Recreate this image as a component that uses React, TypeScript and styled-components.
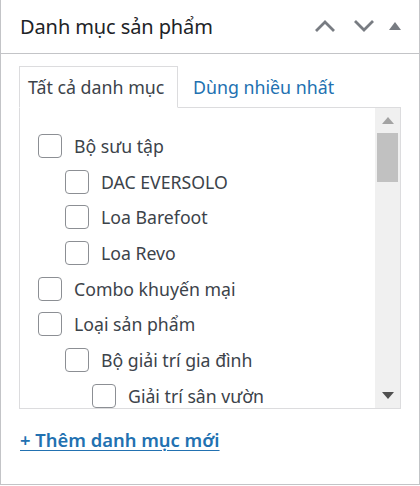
import React from 'react'
import styled, { createGlobalStyle } from 'styled-components'

const Global = createGlobalStyle`
  html, body {
    margin: 0;
    padding: 0;
    background: #fff;
  }
  body {
    font-family: "Noto Sans", "Open Sans", sans-serif;
  }
`

type Term = { name: string; level: number }

const terms: Term[] = [
  { name: 'Bộ sưu tập', level: 0 },
  { name: 'DAC EVERSOLO', level: 1 },
  { name: 'Loa Barefoot', level: 1 },
  { name: 'Loa Revo', level: 1 },
  { name: 'Combo khuyến mại', level: 0 },
  { name: 'Loại sản phẩm', level: 0 },
  { name: 'Bộ giải trí gia đình', level: 1 },
  { name: 'Giải trí sân vườn', level: 2 },
]

export default function App() {
  return (
    <>
      <Global />
      <Postbox>
        <Header>
          <Title>Danh mục sản phẩm</Title>
          <Actions>
            <IconButton aria-label="Move up">
              <svg width="22" height="14" viewBox="0 0 22 14">
                <path d="M2 12 L11 3 L20 12" fill="none" stroke="#787c82" strokeWidth="2.8" />
              </svg>
            </IconButton>
            <IconButton aria-label="Move down">
              <svg width="22" height="14" viewBox="0 0 22 14">
                <path d="M2 2 L11 11 L20 2" fill="none" stroke="#787c82" strokeWidth="2.8" />
              </svg>
            </IconButton>
            <IconButton aria-label="Toggle panel" $small>
              <svg width="12" height="10" viewBox="0 0 12 10">
                <path d="M0 9 L6 1 L12 9 Z" fill="#787c82" />
              </svg>
            </IconButton>
          </Actions>
        </Header>
        <Inside>
          <Tabs>
            <Tab $active>Tất cả danh mục</Tab>
            <Tab>Dùng nhiều nhất</Tab>
          </Tabs>
          <Panel>
            <List>
              {terms.map((t) => (
                <Row key={t.name} $level={t.level}>
                  <Check />
                  <Label>{t.name}</Label>
                </Row>
              ))}
            </List>
            <Scrollbar>
              <ScrollArrow>
                <svg width="12" height="7" viewBox="0 0 12 7">
                  <path d="M0 7 L6 0 L12 7 Z" fill="#a3a3a3" />
                </svg>
              </ScrollArrow>
              <Thumb />
              <Track />
              <ScrollArrow>
                <svg width="12" height="7" viewBox="0 0 12 7">
                  <path d="M0 0 L6 7 L12 0 Z" fill="#505050" />
                </svg>
              </ScrollArrow>
            </Scrollbar>
          </Panel>
          <Footer>
            <AddNew href="#">+ Thêm danh mục mới</AddNew>
          </Footer>
        </Inside>
      </Postbox>
    </>
  )
}

const Postbox = styled.div`
  box-sizing: border-box;
  width: 420px;
  height: 485px;
  border: 1px solid #c3c4c7;
  border-top: none;
  background: #fff;
  display: flex;
  flex-direction: column;
`

const Header = styled.div`
  box-sizing: border-box;
  height: 54px;
  border-bottom: 1px solid #c3c4c7;
  display: flex;
  align-items: center;
  justify-content: space-between;
  padding: 0 0 1px 19px;
`

const Title = styled.h2`
  margin: 0;
  font-size: 20px;
  font-weight: 400;
  color: #1d2327;
  letter-spacing: -0.1px;
`

const Actions = styled.div`
  display: flex;
  align-items: center;
  padding-right: 12px;
`

const IconButton = styled.button<{ $small?: boolean }>`
  border: none;
  background: none;
  padding: 0;
  width: ${(p) => (p.$small ? '24px' : '39px')};
  height: 30px;
  display: flex;
  align-items: center;
  justify-content: center;
  cursor: pointer;
`

const Inside = styled.div`
  padding: 12px 19px 0 18px;
  display: flex;
  flex-direction: column;
`

const Tabs = styled.div`
  display: flex;
  align-items: flex-end;
  position: relative;
  z-index: 1;
  margin-bottom: -1px;
`

const Tab = styled.div<{ $active?: boolean }>`
  box-sizing: border-box;
  height: 42px;
  display: flex;
  align-items: center;
  font-size: 17.8px;
  padding: 0 7px 0 ${(p) => (p.$active ? '8px' : '14px')};
  width: ${(p) => (p.$active ? '159px' : 'auto')};
  color: ${(p) => (p.$active ? '#3c434a' : '#2271b1')};
  background: ${(p) => (p.$active ? '#fff' : 'transparent')};
  border: 1px solid ${(p) => (p.$active ? '#dcdcde' : 'transparent')};
  border-bottom: 1px solid ${(p) => (p.$active ? '#fff' : 'transparent')};
`

const Panel = styled.div`
  box-sizing: border-box;
  width: 382px;
  height: 302px;
  border: 1px solid #dcdcde;
  display: flex;
  overflow: hidden;
`

const List = styled.div`
  flex: 1;
  padding: 20px 0 0 18px;
  overflow: hidden;
`

const Row = styled.div<{ $level: number }>`
  display: flex;
  align-items: center;
  height: 35.7px;
  margin-left: ${(p) => p.$level * 27}px;
`

const Check = styled.span`
  box-sizing: border-box;
  flex: none;
  width: 24px;
  height: 24px;
  border: 1px solid #8c8f94;
  border-radius: 4px;
  background: #fff;
`

const Label = styled.span`
  margin-left: 12px;
  font-size: 17.7px;
  color: #3c434a;
  white-space: nowrap;
`

const Scrollbar = styled.div`
  width: 25px;
  flex: none;
  background: #f0f0f0;
  display: flex;
  flex-direction: column;
  align-items: center;
`

const ScrollArrow = styled.div`
  height: 25px;
  width: 100%;
  display: flex;
  align-items: center;
  justify-content: center;
`

const Thumb = styled.div`
  width: 21px;
  height: 49px;
  background: #c1c1c1;
`

const Track = styled.div`
  flex: 1;
`

const Footer = styled.p`
  margin: 0;
  padding: 17px 0 0 1px;
  line-height: 28px;
`

const AddNew = styled.a`
  font-size: 18.4px;
  font-weight: 600;
  color: #2271b1;
  text-decoration: underline;
  text-underline-offset: 3px;
`
